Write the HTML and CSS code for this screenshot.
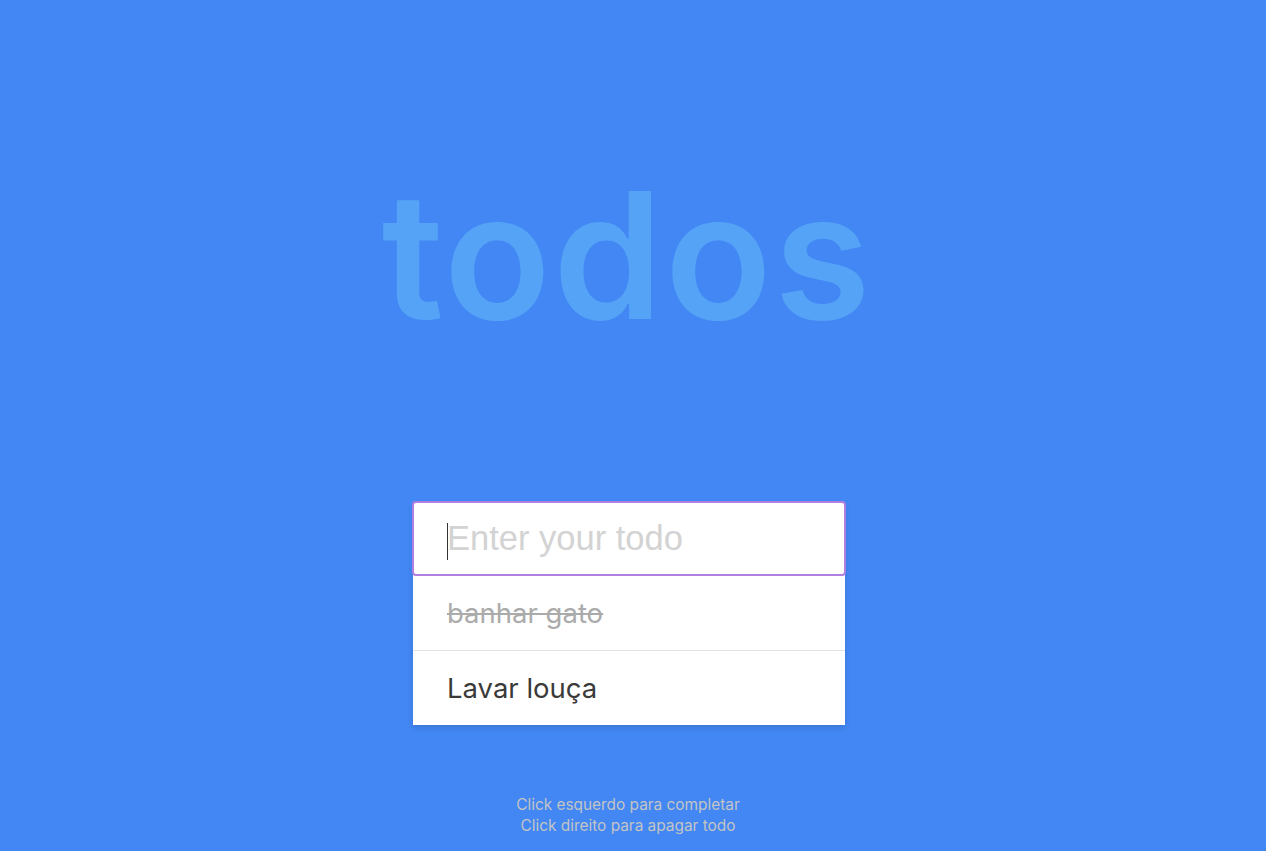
FILE: index.html
```html
<!DOCTYPE html>
<html lang="pt">
<head>
<meta charset="utf-8">
<title>todos</title>
<link rel="stylesheet" href="styles.css">
</head>
<body>
<main class="app">
  <h1 class="title">todos</h1>
  <div class="card">
    <div class="input-wrap">
      <span class="caret"></span>
      <input class="todo-input" type="text" placeholder="Enter your todo">
    </div>
    <ul class="list">
      <li class="item done">banhar gato</li>
      <li class="item">Lavar louça</li>
    </ul>
  </div>
  <p class="hint">Click esquerdo para completar<br>Click direito para apagar todo</p>
</main>
</body>
</html>
```
FILE: styles.css
```css
html, body {
  margin: 0;
  padding: 0;
  height: 100%;
}
body {
  background: #4287f4;
  font-family: Inter, "DejaVu Sans", sans-serif;
  overflow: hidden;
}
.app {
  display: flex;
  flex-direction: column;
  align-items: center;
}
.title {
  margin: 130px 0 0 -12px;
  font-family: Inter, sans-serif;
  font-weight: 600;
  font-size: 176px;
  line-height: 250px;
  height: 250px;
  color: #54a3f6;
  letter-spacing: 2px;
}
.card {
  margin-top: 122px;
  margin-left: -8px;
  width: 432px;
  background: #fff;
  box-shadow: 0 3px 6px rgba(0,0,0,0.12);
}
.input-wrap {
  position: relative;
  height: 75px;
  box-sizing: border-box;
  border: 2px solid #b07fe1;
  border-radius: 4px;
  margin: -1px -1px 0 -1px;
  background: #fff;
}
.caret {
  position: absolute;
  left: 33px;
  top: 20px;
  width: 1px;
  height: 37px;
  background: #333;
}
.todo-input {
  width: 100%;
  height: 100%;
  box-sizing: border-box;
  border: 0;
  outline: none;
  padding: 0 20px 0 33px;
  font-family: "Liberation Sans", Arial, sans-serif;
  font-size: 34.5px;
  color: #333;
  background: transparent;
}
.todo-input::placeholder {
  color: #d3d3d3;
}
.list {
  list-style: none;
  margin: 0;
  padding: 0;
}
.item {
  height: 74px;
  display: flex;
  align-items: center;
  padding: 0 34px;
  font-size: 27.5px;
  color: #3a3a3a;
}
.item + .item {
  border-top: 1px solid #e3e3e3;
}
.item.done {
  color: #ababab;
  text-decoration: line-through;
}
.hint {
  margin: 69px 0 0 -10px;
  text-align: center;
  font-size: 15.4px;
  line-height: 21px;
  color: #c4c4c4;
}
```
